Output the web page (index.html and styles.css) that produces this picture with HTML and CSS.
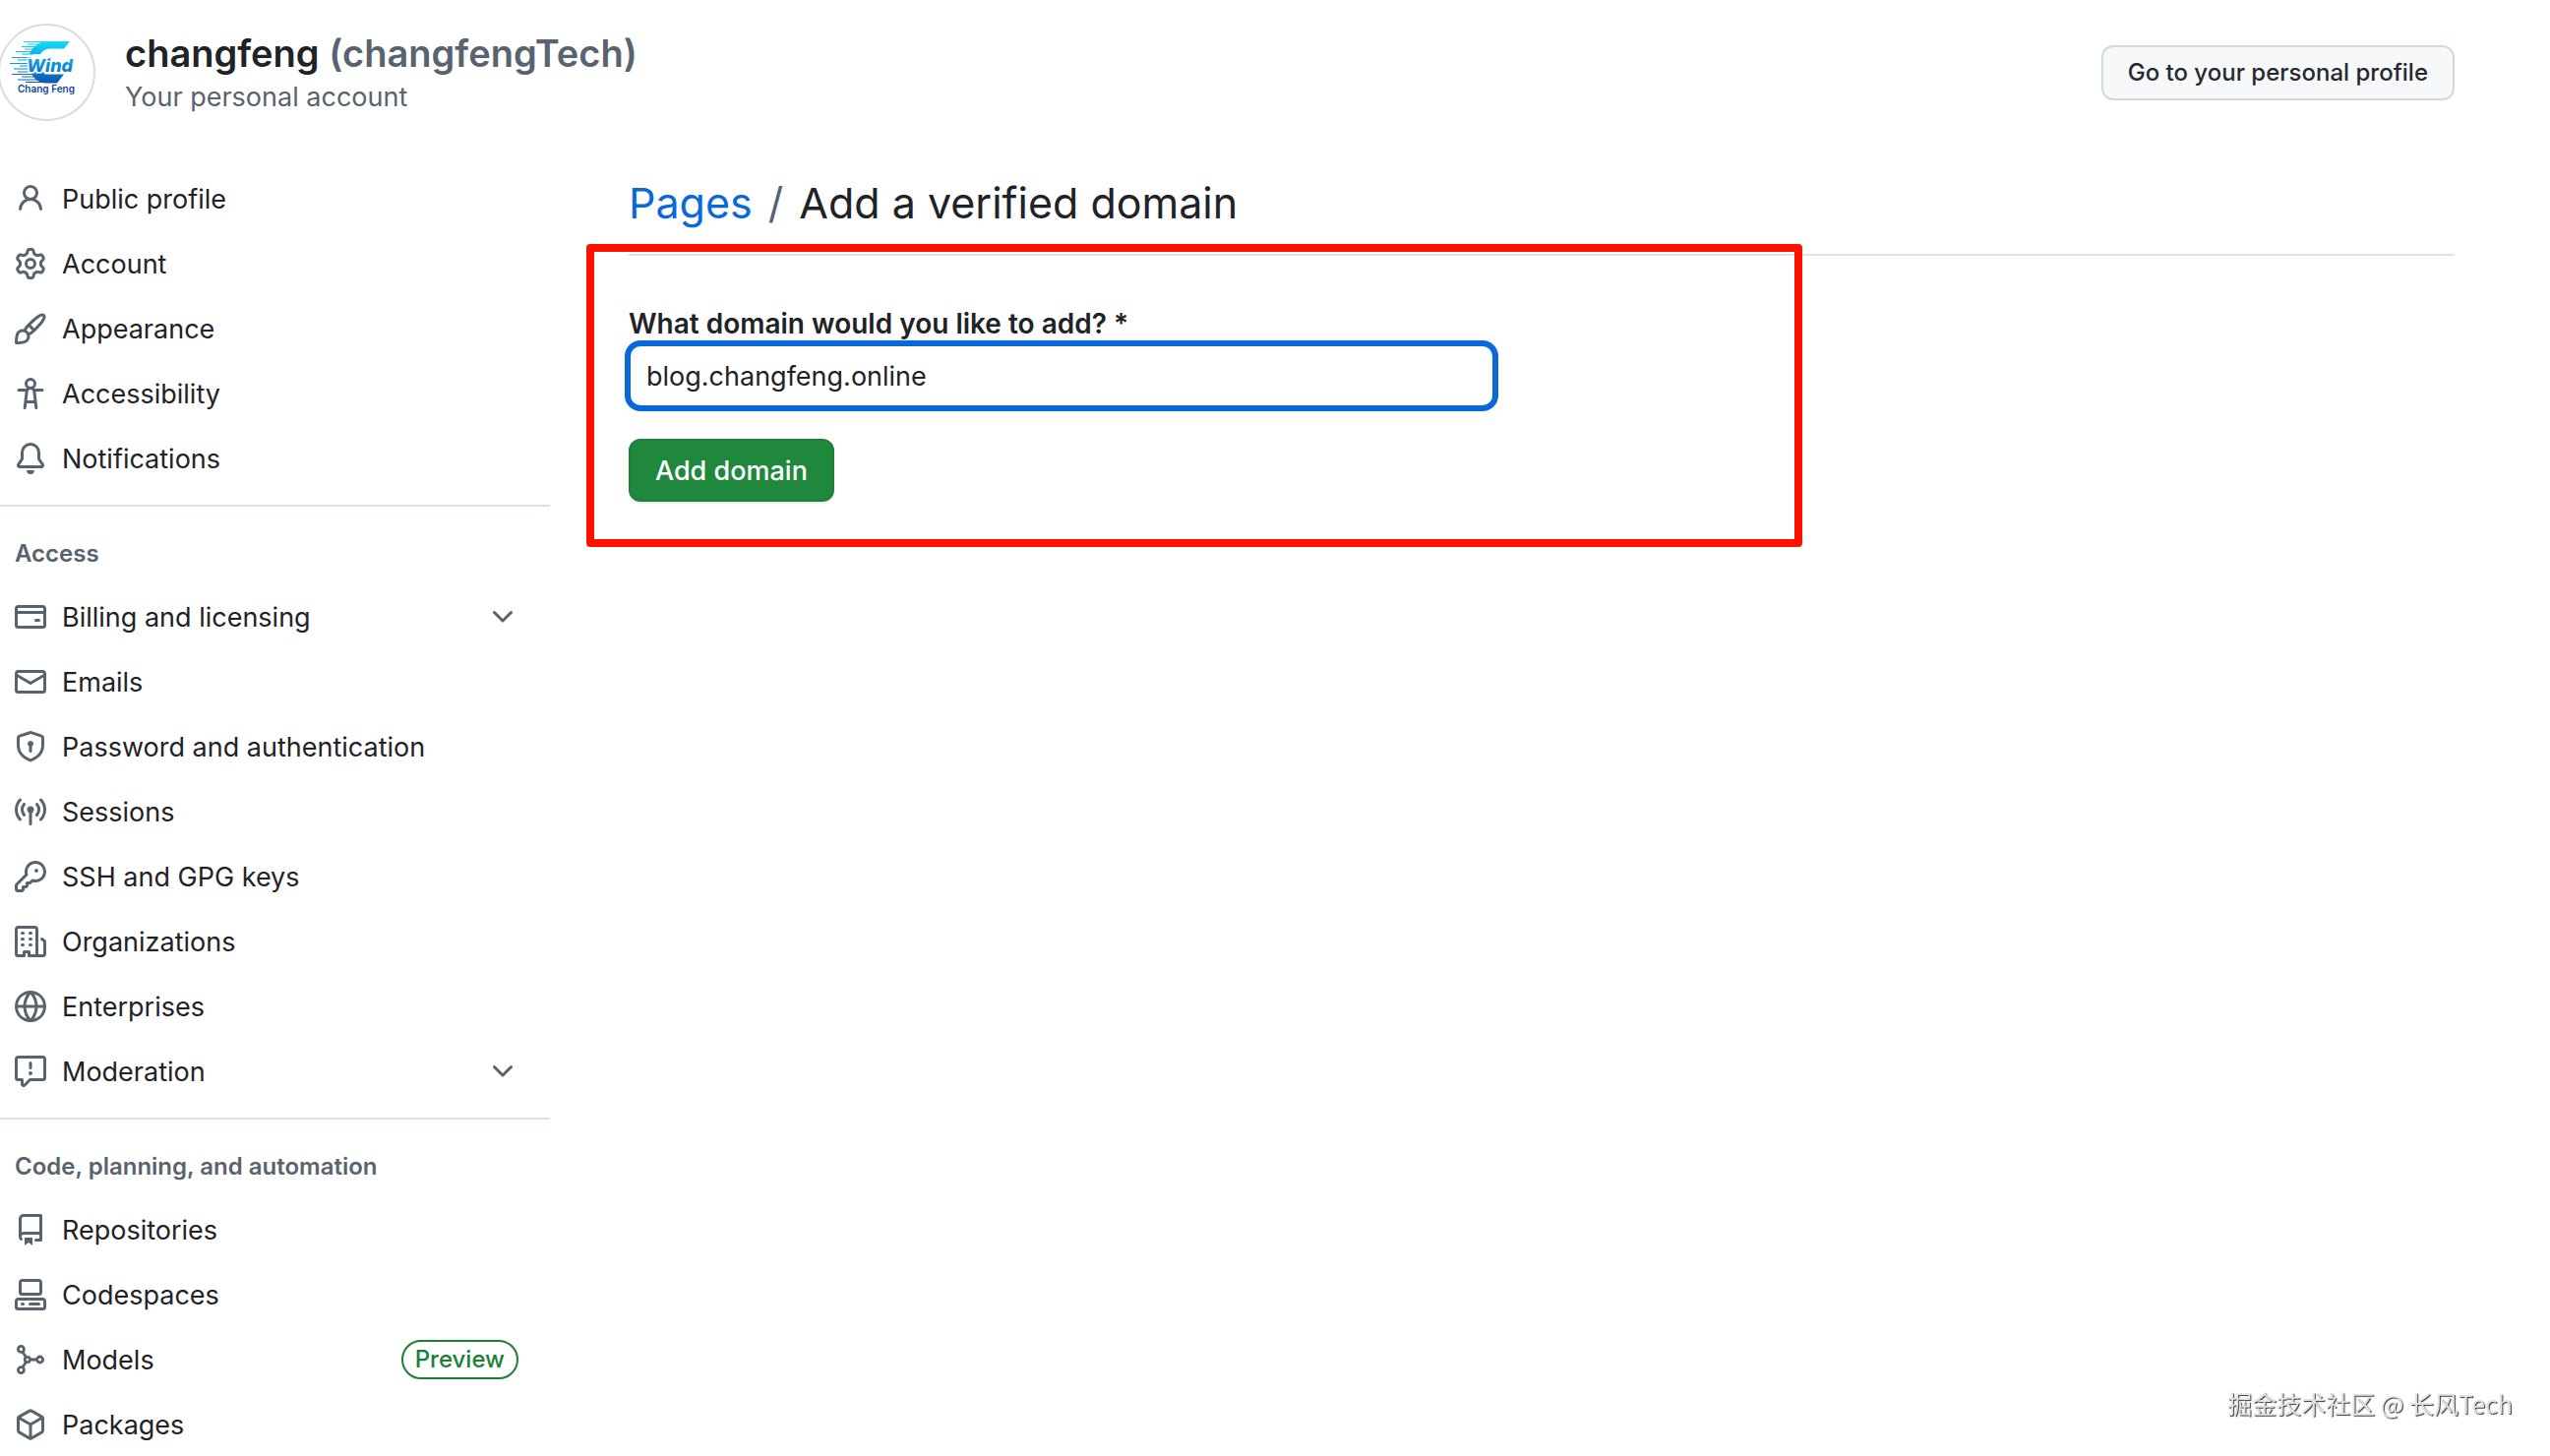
FILE: index.html
```
<!DOCTYPE html>
<html lang="en">
<head>
    <meta charset="UTF-8">
    <meta name="viewport" content="width=device-width, initial-scale=1.0">
    <title>Add a verified domain</title>
    <link rel="stylesheet" href="styles.css">
</head>
<body>
    <header class="profile-header">
        <svg class="avatar" viewBox="0 0 99 99" role="img" aria-label="Chang Feng logo">
            <defs>
                <linearGradient id="wind" gradientUnits="userSpaceOnUse" x1="0" y1="18" x2="0" y2="62">
                    <stop offset="0" stop-color="#12dcf5"/>
                    <stop offset="0.5" stop-color="#1296de"/>
                    <stop offset="1" stop-color="#0a4fae"/>
                </linearGradient>
            </defs>
            <circle cx="49.5" cy="49.5" r="48.5" fill="#fff" stroke="#dcdcdf" stroke-width="2"/>
            <path fill="url(#wind)" d="M46 18H73L67 25.500H52Q46 26 43 31H32Q35 22 46 18ZM33 49H46L48 51.500H67L60 60.500H48Q38 60 33 49Z"/>
            <path fill="none" stroke="url(#wind)" d="M26 18.500H50M30 21H44M24 23.500H42M27 26H40M18 28.500H38M24 31H36M14 34.500H34M20 37H34M12 40.500H32M22 43H32M16 46H32M20 49H36M14 51.500H38M24 54H40M20 57H42M28 59.500H48"/>
            <text class="avatar-wind" x="29" y="49">Wind</text>
            <text class="avatar-name" x="20" y="70">Chang Feng</text>
        </svg>
        <div class="profile-info">
            <h1 class="profile-name">changfeng <span class="muted">(changfengTech)</span></h1>
            <p class="profile-type muted">Your personal account</p>
        </div>
        <a class="btn" href="#">Go to your personal profile</a>
    </header>

    <div class="layout">
        <nav class="sidebar" aria-label="Settings">
            <ul class="nav-list">
                <li><a class="nav-item" href="#">
                    <svg class="icon" viewBox="0 0 16 16"><path d="M10.561 8.073a6.005 6.005 0 0 1 3.432 5.142.75.75 0 1 1-1.498.07 4.5 4.5 0 0 0-8.99 0 .75.75 0 0 1-1.498-.07 6.004 6.004 0 0 1 3.431-5.142 3.999 3.999 0 1 1 5.123 0ZM10.5 5a2.5 2.5 0 1 0-5 0 2.5 2.5 0 0 0 5 0Z"/></svg>
                    <span>Public profile</span>
                </a></li>
                <li><a class="nav-item" href="#">
                    <svg class="icon" viewBox="0 0 16 16"><path d="M8 0a8.2 8.2 0 0 1 .701.031C9.444.095 9.99.645 10.16 1.29l.288 1.107c.018.066.079.158.212.224.231.114.454.243.668.386.123.082.233.09.299.071l1.103-.303c.644-.176 1.392.021 1.82.63.27.385.506.792.704 1.218.315.675.111 1.422-.364 1.891l-.814.806c-.049.048-.098.147-.088.294.016.257.016.515 0 .772-.01.147.038.246.088.294l.814.806c.475.469.679 1.216.364 1.891a7.977 7.977 0 0 1-.704 1.217c-.428.61-1.176.807-1.82.63l-1.102-.302c-.067-.019-.177-.011-.3.071a5.909 5.909 0 0 1-.668.386c-.133.066-.194.158-.211.224l-.29 1.106c-.168.646-.715 1.196-1.458 1.26a8.006 8.006 0 0 1-1.402 0c-.743-.064-1.289-.614-1.458-1.26l-.289-1.106c-.018-.066-.079-.158-.212-.224a5.738 5.738 0 0 1-.668-.386c-.123-.082-.233-.09-.299-.071l-1.103.303c-.644.176-1.392-.021-1.82-.63a8.12 8.12 0 0 1-.704-1.218c-.315-.675-.111-1.422.363-1.891l.815-.806c.05-.048.098-.147.088-.294a6.214 6.214 0 0 1 0-.772c.01-.147-.038-.246-.088-.294l-.815-.806C.635 6.045.431 5.298.746 4.623a7.92 7.92 0 0 1 .704-1.217c.428-.61 1.176-.807 1.82-.63l1.102.302c.067.019.177.011.3-.071.214-.143.437-.272.668-.386.133-.066.194-.158.211-.224l.29-1.106C6.009.645 6.556.095 7.299.03 7.53.01 7.764 0 8 0Zm-.571 1.525c-.036.003-.108.036-.137.146l-.289 1.105c-.147.561-.549.967-.998 1.189-.173.086-.34.183-.5.29-.417.278-.97.423-1.529.27l-1.103-.303c-.109-.03-.175.016-.195.045-.22.312-.412.644-.573.99-.014.031-.021.11.059.19l.815.806c.411.406.562.957.53 1.456a4.709 4.709 0 0 0 0 .582c.032.499-.119 1.05-.53 1.456l-.815.806c-.081.08-.073.159-.059.19.162.346.353.677.573.989.02.03.085.076.195.046l1.102-.303c.56-.153 1.113-.008 1.53.27.161.107.328.204.501.29.447.222.85.629.997 1.189l.289 1.105c.029.109.101.143.137.146a6.6 6.6 0 0 0 1.142 0c.036-.003.108-.036.137-.146l.289-1.105c.147-.561.549-.967.998-1.189.173-.086.34-.183.5-.29.417-.278.97-.423 1.529-.27l1.103.303c.109.029.175-.016.195-.045.22-.313.411-.644.573-.99.014-.031.021-.11-.059-.19l-.815-.806c-.411-.406-.562-.957-.53-1.456a4.709 4.709 0 0 0 0-.582c-.032-.499.119-1.05.53-1.456l.815-.806c.081-.08.073-.159.059-.19a6.464 6.464 0 0 0-.573-.989c-.02-.03-.085-.076-.195-.046l-1.102.303c-.56.153-1.113.008-1.53-.27a4.44 4.44 0 0 0-.501-.29c-.447-.222-.85-.629-.997-1.189l-.289-1.105c-.029-.11-.101-.143-.137-.146a6.6 6.6 0 0 0-1.142 0ZM11 8a3 3 0 1 1-6 0 3 3 0 0 1 6 0ZM9.5 8a1.5 1.5 0 1 0-3.001.001A1.5 1.5 0 0 0 9.5 8Z"/></svg>
                    <span>Account</span>
                </a></li>
                <li><a class="nav-item" href="#">
                    <svg class="icon" viewBox="0 0 16 16"><path d="M11.134 1.535c.7-.509 1.416-.942 2.076-1.155.649-.21 1.463-.267 2.069.34.603.601.568 1.411.368 2.07-.202.668-.624 1.39-1.125 2.096-1.011 1.424-2.496 2.987-3.775 4.249-1.098 1.084-2.132 1.839-3.04 2.3a3.744 3.744 0 0 1-1.055 3.217c-.431.431-1.065.691-1.657.861-.614.177-1.294.287-1.914.357A21.151 21.151 0 0 1 .797 16H.743a.75.75 0 0 1-.743-.743v-.054a21.25 21.25 0 0 1 .13-2.284c.067-.647.187-1.287.358-1.914.17-.591.43-1.226.86-1.657a3.746 3.746 0 0 1 3.227-1.054c.466-.893 1.225-1.907 2.314-2.982 1.271-1.255 2.833-2.75 4.245-3.777ZM1.62 13.089c-.051.464-.086.929-.104 1.395.466-.018.932-.053 1.396-.104a10.511 10.511 0 0 0 1.668-.309c.526-.151.856-.325 1.011-.48a2.25 2.25 0 1 0-3.182-3.182c-.155.155-.329.485-.48 1.01a10.515 10.515 0 0 0-.309 1.67Zm10.396-10.34c-1.224.89-2.605 2.189-3.822 3.384l1.718 1.718c1.21-1.205 2.51-2.597 3.387-3.833.47-.662.78-1.227.912-1.662.134-.444.032-.551.009-.575h-.001V1.78c-.014-.014-.113-.113-.548.027-.432.14-.995.462-1.655.942Zm-4.832 7.266-.001.001a9.859 9.859 0 0 0 1.63-1.142L7.155 7.216a9.7 9.7 0 0 0-1.161 1.607c.482.302.889.71 1.19 1.192Z"/></svg>
                    <span>Appearance</span>
                </a></li>
                <li><a class="nav-item" href="#">
                    <svg class="icon" viewBox="0 0 16 16"><path d="M9.923 5.302c.063.063.122.129.178.198H14A.75.75 0 0 1 14 7h-3.3l.578 5.163.362 2.997a.75.75 0 0 1-1.49.18L9.868 13H6.132l-.282 2.34a.75.75 0 0 1-1.49-.18l.362-2.997L5.3 7H2a.75.75 0 0 1 0-1.5h3.9a2.54 2.54 0 0 1 .176-.198 3 3 0 1 1 3.847 0ZM9.2 7.073h-.001a1.206 1.206 0 0 0-2.398 0L6.305 11.5h3.39ZM9.5 3a1.5 1.5 0 1 0-3.001.001A1.5 1.5 0 0 0 9.5 3Z"/></svg>
                    <span>Accessibility</span>
                </a></li>
                <li><a class="nav-item" href="#">
                    <svg class="icon" viewBox="0 0 16 16"><path d="M8 16a2 2 0 0 0 1.985-1.75c.017-.137-.097-.25-.235-.25h-3.5c-.138 0-.252.113-.235.25A2 2 0 0 0 8 16ZM3 5a5 5 0 0 1 10 0v2.947c0 .05.015.098.042.139l1.703 2.555A1.519 1.519 0 0 1 13.482 13H2.518a1.516 1.516 0 0 1-1.263-2.36l1.703-2.554A.255.255 0 0 0 3 7.947Zm5-3.5A3.5 3.5 0 0 0 4.5 5v2.947c0 .346-.102.683-.294.97l-1.703 2.556a.017.017 0 0 0-.003.01l.001.006c0 .002.002.004.004.006l.006.004.007.001h10.964l.007-.001.006-.004.004-.006.001-.007a.017.017 0 0 0-.003-.01l-1.703-2.554a1.745 1.745 0 0 1-.294-.97V5A3.5 3.5 0 0 0 8 1.5Z"/></svg>
                    <span>Notifications</span>
                </a></li>
            </ul>

            <h2 class="nav-heading">Access</h2>
            <ul class="nav-list">
                <li><button class="nav-item" type="button" aria-expanded="false">
                    <svg class="icon" viewBox="0 0 16 16"><path d="M10.75 9a.75.75 0 0 0 0 1.5h1.5a.75.75 0 0 0 0-1.5h-1.5Z"/><path d="M0 3.75C0 2.784.784 2 1.75 2h12.5c.966 0 1.75.784 1.75 1.75v8.5A1.75 1.75 0 0 1 14.25 14H1.75A1.75 1.75 0 0 1 0 12.25ZM14.5 6.5h-13v5.75c0 .138.112.25.25.25h12.5a.25.25 0 0 0 .25-.25Zm0-2.75a.25.25 0 0 0-.25-.25H1.75a.25.25 0 0 0-.25.25V5h13Z"/></svg>
                    <span>Billing and licensing</span>
                    <svg class="icon nav-trailing" viewBox="0 0 16 16"><path d="M12.78 5.22a.749.749 0 0 1 0 1.06l-4.25 4.25a.749.749 0 0 1-1.06 0L3.22 6.28a.749.749 0 1 1 1.06-1.06L8 8.939l3.72-3.719a.749.749 0 0 1 1.06 0Z"/></svg>
                </button></li>
                <li><a class="nav-item" href="#">
                    <svg class="icon" viewBox="0 0 16 16"><path d="M1.75 2h12.5c.966 0 1.75.784 1.75 1.75v8.5A1.75 1.75 0 0 1 14.25 14H1.75A1.75 1.75 0 0 1 0 12.25v-8.5C0 2.784.784 2 1.75 2ZM1.5 12.251c0 .138.112.25.25.25h12.5a.25.25 0 0 0 .25-.25V5.809L8.38 9.397a.75.75 0 0 1-.76 0L1.5 5.809v6.442Zm13-8.181v-.32a.25.25 0 0 0-.25-.25H1.75a.25.25 0 0 0-.25.25v.32L8 7.88Z"/></svg>
                    <span>Emails</span>
                </a></li>
                <li><a class="nav-item" href="#">
                    <svg class="icon" viewBox="0 0 16 16"><path d="m8.533.133 5.25 1.68A1.75 1.75 0 0 1 15 3.48V7c0 1.566-.32 3.182-1.303 4.682-.983 1.498-2.585 2.813-5.032 3.855a1.697 1.697 0 0 1-1.33 0c-2.447-1.042-4.049-2.357-5.032-3.855C1.32 10.182 1 8.566 1 7V3.48a1.75 1.75 0 0 1 1.217-1.667l5.25-1.68a1.748 1.748 0 0 1 1.066 0Zm-.61 1.429.001.001-5.25 1.68a.251.251 0 0 0-.174.237V7c0 1.36.275 2.666 1.057 3.859.784 1.194 2.121 2.342 4.366 3.298a.196.196 0 0 0 .154 0c2.245-.957 3.582-2.103 4.366-3.297C13.225 9.666 13.5 8.358 13.5 7V3.48a.25.25 0 0 0-.174-.238l-5.25-1.68a.25.25 0 0 0-.153 0ZM9.5 6.5c0 .536-.286 1.032-.75 1.3v2.45a.75.75 0 0 1-1.5 0V7.8A1.5 1.5 0 1 1 9.5 6.5Z"/></svg>
                    <span>Password and authentication</span>
                </a></li>
                <li><a class="nav-item" href="#">
                    <svg class="icon" viewBox="0 0 16 16"><path d="M8.75 8.582v5.668a.75.75 0 0 1-1.5 0V8.582a1.75 1.75 0 1 1 1.5 0Zm3.983-7.125a.75.75 0 0 1 1.06.026A7.976 7.976 0 0 1 16 7c0 2.139-.84 4.083-2.207 5.517a.75.75 0 1 1-1.086-1.034A6.474 6.474 0 0 0 14.5 7a6.474 6.474 0 0 0-1.793-4.483.75.75 0 0 1 .026-1.06Zm-9.466 0c.3.286.312.76.026 1.06A6.474 6.474 0 0 0 1.5 7a6.47 6.47 0 0 0 1.793 4.483.75.75 0 0 1-1.086 1.034A7.973 7.973 0 0 1 0 7c0-2.139.84-4.083 2.207-5.517a.75.75 0 0 1 1.06-.026Zm8.556 2.321A4.988 4.988 0 0 1 13 7a4.988 4.988 0 0 1-1.177 3.222.75.75 0 1 1-1.146-.967A3.487 3.487 0 0 0 11.5 7c0-.86-.309-1.645-.823-2.255a.75.75 0 0 1 1.146-.967Zm-6.492.958A3.48 3.48 0 0 0 4.5 7a3.48 3.48 0 0 0 .823 2.255.75.75 0 0 1-1.146.967A4.981 4.981 0 0 1 3 7a4.982 4.982 0 0 1 1.188-3.236.75.75 0 1 1 1.143.972Z"/></svg>
                    <span>Sessions</span>
                </a></li>
                <li><a class="nav-item" href="#">
                    <svg class="icon" viewBox="0 0 16 16"><path d="M10.5 0a5.499 5.499 0 1 1-1.288 10.848l-.932.932a.749.749 0 0 1-.53.22H7v.75a.749.749 0 0 1-.22.53l-.5.5a.749.749 0 0 1-.53.22H5v.75a.749.749 0 0 1-.22.53l-.5.5a.749.749 0 0 1-.53.22h-2A1.75 1.75 0 0 1 0 14.25v-2c0-.199.079-.389.22-.53l4.932-4.932A5.5 5.5 0 0 1 10.5 0Zm-4 5.5c-.001.431.069.86.205 1.269a.75.75 0 0 1-.181.768L1.5 12.56v1.69c0 .138.112.25.25.25h1.69l.06-.06v-1.19a.75.75 0 0 1 .75-.75h1.19l.06-.06v-1.19a.75.75 0 0 1 .75-.75h1.19l1.023-1.025a.75.75 0 0 1 .768-.18A4 4 0 1 0 6.5 5.5ZM11 6a1 1 0 1 1 0-2 1 1 0 0 1 0 2Z"/></svg>
                    <span>SSH and GPG keys</span>
                </a></li>
                <li><a class="nav-item" href="#">
                    <svg class="icon" viewBox="0 0 16 16"><path d="M1.75 16A1.75 1.75 0 0 1 0 14.25V1.75C0 .784.784 0 1.75 0h8.5C11.216 0 12 .784 12 1.75v12.5c0 .085-.006.168-.018.25h2.268a.25.25 0 0 0 .25-.25V8.285a.25.25 0 0 0-.111-.208l-1.055-.703a.749.749 0 1 1 .832-1.248l1.055.703c.487.325.779.871.779 1.456v5.965A1.75 1.75 0 0 1 14.25 16h-3.5a.766.766 0 0 1-.197-.026c-.099.017-.2.026-.303.026h-3a.75.75 0 0 1-.75-.75V14h-1v1.25a.75.75 0 0 1-.75.75Zm-.25-1.75c0 .138.112.25.25.25H4v-1.25a.75.75 0 0 1 .75-.75h2.5a.75.75 0 0 1 .75.75v1.25h2.25a.25.25 0 0 0 .25-.25V1.75a.25.25 0 0 0-.25-.25h-8.5a.25.25 0 0 0-.25.25ZM3.75 6h.5a.75.75 0 0 1 0 1.5h-.5a.75.75 0 0 1 0-1.5ZM3 3.75A.75.75 0 0 1 3.75 3h.5a.75.75 0 0 1 0 1.5h-.5A.75.75 0 0 1 3 3.75Zm4 3A.75.75 0 0 1 7.75 6h.5a.75.75 0 0 1 0 1.5h-.5A.75.75 0 0 1 7 6.75ZM7.75 3h.5a.75.75 0 0 1 0 1.5h-.5a.75.75 0 0 1 0-1.5ZM3 9.75A.75.75 0 0 1 3.75 9h.5a.75.75 0 0 1 0 1.5h-.5A.75.75 0 0 1 3 9.75ZM7.75 9h.5a.75.75 0 0 1 0 1.5h-.5a.75.75 0 0 1 0-1.5Z"/></svg>
                    <span>Organizations</span>
                </a></li>
                <li><a class="nav-item" href="#">
                    <svg class="icon" viewBox="0 0 16 16"><path d="M8 0a8 8 0 1 1 0 16A8 8 0 0 1 8 0ZM5.78 8.75a9.64 9.64 0 0 0 1.363 4.177c.255.426.542.832.857 1.215.245-.296.551-.705.857-1.215A9.64 9.64 0 0 0 10.22 8.75Zm4.44-1.5a9.64 9.64 0 0 0-1.363-4.177c-.307-.51-.612-.919-.857-1.215a9.927 9.927 0 0 0-.857 1.215A9.64 9.64 0 0 0 5.78 7.25Zm-5.944 1.5H1.543a6.507 6.507 0 0 0 4.666 5.5c-.123-.181-.24-.365-.352-.552-.715-1.192-1.437-2.874-1.581-4.948Zm-2.733-1.5h2.733c.144-2.074.866-3.756 1.58-4.948.12-.197.237-.381.353-.552a6.507 6.507 0 0 0-4.666 5.5Zm10.181 1.5c-.144 2.074-.866 3.756-1.58 4.948-.12.197-.237.381-.353.552a6.507 6.507 0 0 0 4.666-5.5Zm2.733-1.5a6.507 6.507 0 0 0-4.666-5.5c.123.181.24.365.353.552.714 1.192 1.436 2.874 1.58 4.948Z"/></svg>
                    <span>Enterprises</span>
                </a></li>
                <li><button class="nav-item" type="button" aria-expanded="false">
                    <svg class="icon" viewBox="0 0 16 16"><path d="M0 1.75C0 .784.784 0 1.75 0h12.5C15.216 0 16 .784 16 1.75v9.5A1.75 1.75 0 0 1 14.25 13H8.06l-2.573 2.573A1.458 1.458 0 0 1 3 14.543V13H1.75A1.75 1.75 0 0 1 0 11.25Zm1.75-.25a.25.25 0 0 0-.25.25v9.5c0 .138.112.25.25.25h2a.75.75 0 0 1 .75.75v2.19l2.72-2.72a.749.749 0 0 1 .53-.22h6.5a.25.25 0 0 0 .25-.25v-9.5a.25.25 0 0 0-.25-.25Zm7 2.25v2.5a.75.75 0 0 1-1.5 0v-2.5a.75.75 0 0 1 1.5 0ZM9 9a1 1 0 1 1-2 0 1 1 0 0 1 2 0Z"/></svg>
                    <span>Moderation</span>
                    <svg class="icon nav-trailing" viewBox="0 0 16 16"><path d="M12.78 5.22a.749.749 0 0 1 0 1.06l-4.25 4.25a.749.749 0 0 1-1.06 0L3.22 6.28a.749.749 0 1 1 1.06-1.06L8 8.939l3.72-3.719a.749.749 0 0 1 1.06 0Z"/></svg>
                </button></li>
            </ul>

            <h2 class="nav-heading">Code, planning, and automation</h2>
            <ul class="nav-list">
                <li><a class="nav-item" href="#">
                    <svg class="icon" viewBox="0 0 16 16"><path d="M2 2.5A2.5 2.5 0 0 1 4.5 0h8.75a.75.75 0 0 1 .75.75v12.5a.75.75 0 0 1-.75.75h-2.5a.75.75 0 0 1 0-1.5h1.75v-2h-8a1 1 0 0 0-.714 1.7.75.75 0 1 1-1.072 1.05A2.495 2.495 0 0 1 2 11.5Zm10.5-1h-8a1 1 0 0 0-1 1v6.708A2.486 2.486 0 0 1 4.5 9h8ZM5 12.25a.25.25 0 0 1 .25-.25h3.5a.25.25 0 0 1 .25.25v3.25a.25.25 0 0 1-.4.2l-1.45-1.087a.249.249 0 0 0-.3 0L5.4 15.7a.25.25 0 0 1-.4-.2Z"/></svg>
                    <span>Repositories</span>
                </a></li>
                <li><a class="nav-item" href="#">
                    <svg class="icon" viewBox="0 0 16 16"><path d="M0 11.25c0-.966.784-1.75 1.75-1.75h12.5c.966 0 1.75.784 1.75 1.75v3A1.75 1.75 0 0 1 14.25 16H1.75A1.75 1.75 0 0 1 0 14.25Zm2-9.5C2 .784 2.784 0 3.75 0h8.5C13.216 0 14 .784 14 1.75v5a1.75 1.75 0 0 1-1.75 1.75h-8.5A1.75 1.75 0 0 1 2 6.75Zm1.75-.25a.25.25 0 0 0-.25.25v5c0 .138.112.25.25.25h8.5a.25.25 0 0 0 .25-.25v-5a.25.25 0 0 0-.25-.25Zm-2 9.5a.25.25 0 0 0-.25.25v3c0 .138.112.25.25.25h12.5a.25.25 0 0 0 .25-.25v-3a.25.25 0 0 0-.25-.25Z"/><path d="M7 12.75a.75.75 0 0 1 .75-.75h4.5a.75.75 0 0 1 0 1.5h-4.5a.75.75 0 0 1-.75-.75Zm-4 0a.75.75 0 0 1 .75-.75h.5a.75.75 0 0 1 0 1.5h-.5a.75.75 0 0 1-.75-.75Z"/></svg>
                    <span>Codespaces</span>
                </a></li>
                <li><a class="nav-item" href="#">
                    <svg class="icon icon-line" viewBox="0 0 16 16">
                        <circle cx="3.2" cy="2.7" r="1.5"/>
                        <circle cx="3.2" cy="13.3" r="1.5"/>
                        <circle cx="12.8" cy="8" r="1.5"/>
                        <circle cx="6.4" cy="8" r="1.3"/>
                        <path d="M3.9 4L5.8 6.8M3.9 12L5.8 9.2M7.7 8H11.3"/>
                    </svg>
                    <span>Models</span>
                    <span class="badge nav-trailing">Preview</span>
                </a></li>
                <li><a class="nav-item" href="#">
                    <svg class="icon" viewBox="0 0 16 16"><path d="m8.878.392 5.25 3.045c.54.314.872.89.872 1.514v6.098a1.75 1.75 0 0 1-.872 1.514l-5.25 3.045a1.75 1.75 0 0 1-1.756 0l-5.25-3.045A1.75 1.75 0 0 1 1 11.049V4.951c0-.624.332-1.201.872-1.514L7.122.392a1.75 1.75 0 0 1 1.756 0ZM7.875 1.69l-4.63 2.685L8 7.133l4.755-2.758-4.63-2.685a.248.248 0 0 0-.25 0ZM2.5 5.677v5.372c0 .09.047.171.125.216l4.625 2.683V8.432Zm6.25 8.271 4.625-2.683a.25.25 0 0 0 .125-.216V5.677L8.75 8.432Z"/></svg>
                    <span>Packages</span>
                </a></li>
            </ul>
        </nav>

        <main class="content">
            <h2 class="page-title"><a href="#">Pages</a><span class="slash muted">/</span>Add a verified domain</h2>
            <form class="domain-form">
                <label for="domain">What domain would you like to add? *</label>
                <input type="text" id="domain" value="blog.changfeng.online" required>
                <button class="btn-primary" type="submit">Add domain</button>
                <div class="highlight"></div>
            </form>
        </main>
    </div>

    <div class="watermark" lang="zh-CN">掘金技术社区 @ 长风Tech</div>
</body>
</html>
```
FILE: styles.css
```
* {
    box-sizing: border-box;
}
body {
    margin: 0;
    font-family: Inter, "Noto Sans CJK SC", sans-serif;
    font-size: 27px;
    color: #1f2328;
    background: #fff;
}
a {
    color: #0969da;
    text-decoration: none;
}
.muted {
    color: #59636e;
}

/* Header */
.profile-header {
    display: flex;
    align-items: center;
    gap: 30px;
    padding: 24px 97px 0 0;
}
.avatar {
    flex: none;
    width: 99px;
    height: 99px;
    margin-left: -2px;
}
.avatar-wind {
    font: italic 800 18px Inter, sans-serif;
    fill: url(#wind);
    stroke: #fff;
    stroke-width: 3px;
    paint-order: stroke;
}
.avatar-name {
    font: 600 10px Inter, sans-serif;
    fill: #0b4496;
}
.profile-info {
    flex: 1;
}
.profile-name {
    margin: 0;
    font-size: 38px;
    font-weight: 600;
    line-height: 58px;
}
.profile-type {
    margin: 0 0 8px;
    line-height: 32px;
}
.btn {
    padding: 0 25px;
    font-size: 24px;
    font-weight: 500;
    line-height: 52px;
    color: #25292e;
    background: #f6f8fa;
    border: 2px solid #d1d9e0;
    border-radius: 12px;
}

/* Sidebar */
.layout {
    display: flex;
    gap: 80px;
    padding: 46px 97px 0 0;
}
.sidebar {
    flex: 0 0 559px;
}
.nav-list {
    margin: 0;
    padding: 0;
    list-style: none;
}
.nav-item {
    display: flex;
    align-items: center;
    gap: 16px;
    width: 100%;
    height: 66px;
    padding: 0 32px 0 15px;
    font: inherit;
    color: #1f2328;
    background: none;
    border: none;
}
.nav-trailing {
    margin-left: auto;
}
.nav-heading {
    margin: 14px 0 0;
    padding: 16px 15px 0;
    border-top: 2px solid #dfe2e5;
    font-size: 24px;
    font-weight: 600;
    line-height: 63px;
    color: #59636e;
}
.icon {
    flex: none;
    width: 32px;
    height: 32px;
    fill: #59636e;
}
.icon-line {
    fill: none;
    stroke: #59636e;
    stroke-width: 1.4;
}
.badge {
    padding: 0 12px;
    font-size: 24px;
    font-weight: 500;
    line-height: 36px;
    color: #1a7f37;
    border: 2px solid #1a7f37;
    border-radius: 20px;
}

/* Content */
.content {
    flex: 1;
    padding-top: 5px;
}
.page-title {
    margin: 0;
    padding-bottom: 20px;
    border-bottom: 2px solid #dfe2e5;
    font-size: 43px;
    font-weight: 400;
    line-height: 64px;
}
.slash {
    padding: 0 16px;
}
.domain-form {
    position: relative;
    display: flex;
    flex-direction: column;
    align-items: flex-start;
    padding: 52px 0 46px;
}
.domain-form label {
    font-size: 28px;
    font-weight: 600;
    line-height: 34px;
}
.domain-form input {
    width: 100%;
    max-width: 880px;
    height: 64px;
    margin-top: 4px;
    padding: 0 16px;
    font: inherit;
    color: #1f2328;
    border: 2px solid #0969da;
    border-radius: 12px;
    outline: none;
    box-shadow: 0 0 0 4px #0969da;
}
.btn-primary {
    height: 64px;
    margin-top: 32px;
    padding: 0 25px;
    font: inherit;
    font-weight: 500;
    color: #fff;
    background: #1f883d;
    border: 2px solid #1f7f3a;
    border-radius: 12px;
    box-shadow: 0 2px 2px rgba(31, 35, 40, 0.1);
}
.highlight {
    position: absolute;
    top: -12px;
    bottom: 0;
    left: -43px;
    width: 1236px;
    border: 8px solid #ff1100;
    border-radius: 4px;
    pointer-events: none;
}

.watermark {
    position: fixed;
    right: 38px;
    bottom: 36px;
    font-family: "Noto Sans CJK SC", sans-serif;
    font-size: 25px;
    color: #e2e2e2;
    text-shadow: 1px 1px 1px #333;
}
```
